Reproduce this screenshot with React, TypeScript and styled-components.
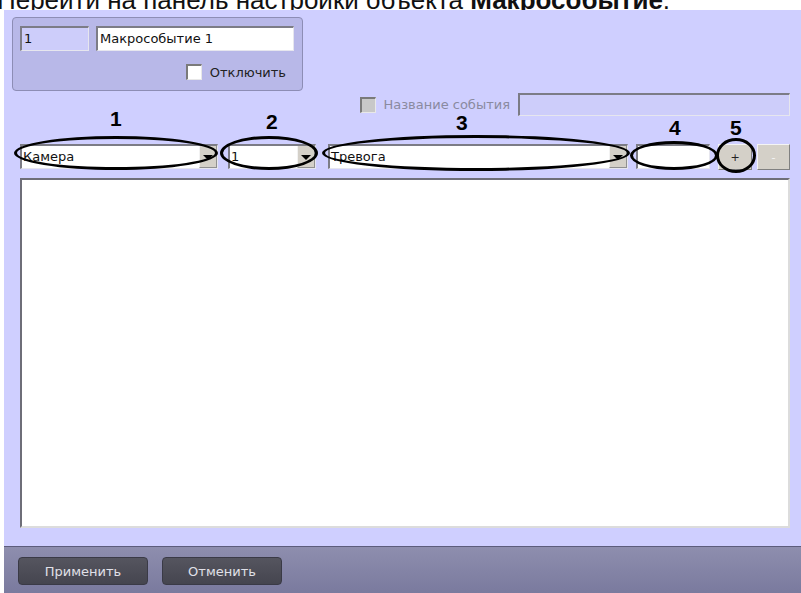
import React from "react";
import styled, { createGlobalStyle } from "styled-components";

const GlobalStyle = createGlobalStyle`
  html, body {
    margin: 0;
    padding: 0;
    background: #ffffff;
  }
  body {
    font-family: Tahoma, "DejaVu Sans", "Liberation Sans", sans-serif;
  }
`;

const Page = styled.div`
  width: 801px;
  height: 593px;
  display: flex;
  flex-direction: column;
  overflow: hidden;
`;

const CaptionStrip = styled.div`
  height: 10px;
  overflow: hidden;
  white-space: nowrap;
`;

const Caption = styled.div`
  font-family: "Liberation Sans", Arial, sans-serif;
  font-size: 26px;
  line-height: 26px;
  color: #111;
  margin-top: -13px;
  margin-left: -3px;

  b {
    font-weight: bold;
  }
`;

const Window = styled.div`
  flex: 1;
  margin-left: 4px;
  display: flex;
  flex-direction: column;
`;

const Panel = styled.div`
  flex: 1;
  background: #cfcfff;
  display: flex;
  flex-direction: column;
  padding: 7px 11px 0 8px;
`;

const GroupBox = styled.div`
  width: 291px;
  height: 74px;
  border: 1px solid #8d8db5;
  border-radius: 4px;
  background: #b8b8e8;
  padding: 8px 8px 0 7px;
  box-sizing: border-box;
  display: flex;
  flex-direction: column;
  gap: 13px;
`;

const FieldRow = styled.div`
  display: flex;
  gap: 7px;
`;

const TextField = styled.div<{ $w: number; $h?: number; $disabled?: boolean }>`
  width: ${(p) => p.$w}px;
  height: ${(p) => p.$h ?? 25}px;
  box-sizing: border-box;
  background: ${(p) => (p.$disabled ? "#cdcdfa" : "#ffffff")};
  border-top: 2px solid #7c7c86;
  border-left: 2px solid #7c7c86;
  border-right: 1px solid #e6e6ee;
  border-bottom: 1px solid #e6e6ee;
  font-size: 13px;
  color: #111;
  padding: 3px 0 0 2px;
  white-space: nowrap;
  overflow: hidden;
`;

const CheckRow = styled.div`
  display: flex;
  justify-content: flex-end;
  align-items: center;
  gap: 8px;
  padding-right: 8px;
`;

const CheckBox = styled.div<{ $disabled?: boolean }>`
  width: 16px;
  height: 16px;
  box-sizing: border-box;
  background: ${(p) => (p.$disabled ? "#c8c8c8" : "#ffffff")};
  border-top: 2px solid #7a7a7a;
  border-left: 2px solid #7a7a7a;
  border-right: 1px solid #e8e8e8;
  border-bottom: 1px solid #e8e8e8;
`;

const CheckLabel = styled.span<{ $disabled?: boolean }>`
  font-size: 13px;
  color: ${(p) => (p.$disabled ? "#8a8aa0" : "#222")};
`;

const NameRow = styled.div`
  margin-top: 2px;
  display: flex;
  justify-content: flex-end;
  align-items: center;
  gap: 8px;
`;

const NameLabelGroup = styled.div`
  display: flex;
  align-items: center;
  gap: 7px;
`;

const ComboRow = styled.div`
  margin-top: 28px;
  margin-left: 8px;
  display: flex;
  align-items: flex-start;
`;

const Marked = styled.div<{ $ml: number }>`
  position: relative;
  margin-left: ${(p) => p.$ml}px;
`;

const Combo = styled.div<{ $w: number }>`
  width: ${(p) => p.$w}px;
  height: 25px;
  box-sizing: border-box;
  background: #ffffff;
  border-top: 2px solid #7c7c86;
  border-left: 2px solid #7c7c86;
  border-right: 1px solid #e6e6ee;
  border-bottom: 1px solid #e6e6ee;
  display: flex;
  font-size: 13px;
  color: #111;
`;

const ComboText = styled.div`
  flex: 1;
  padding: 3px 0 0 1px;
  white-space: nowrap;
`;

const DropButton = styled.div`
  width: 18px;
  background: #d4d0c8;
  border-left: 1px solid #f2f2f2;
  border-right: 1px solid #909090;
  border-bottom: 1px solid #909090;
  box-sizing: border-box;
  display: flex;
  align-items: center;
  justify-content: center;
`;

const Arrow = styled.div`
  width: 0;
  height: 0;
  border-left: 5px solid transparent;
  border-right: 5px solid transparent;
  border-top: 5px solid #000;
  margin-top: 1px;
`;

const PushButton = styled.div<{ $w: number; $faint?: boolean }>`
  width: ${(p) => p.$w}px;
  height: 26px;
  box-sizing: border-box;
  background: #d4d0c8;
  border-top: 1px solid #f4f4f4;
  border-left: 1px solid #f4f4f4;
  border-right: 1px solid #808080;
  border-bottom: 1px solid #808080;
  display: flex;
  align-items: center;
  justify-content: center;
  font-size: 11px;
  color: ${(p) => (p.$faint ? "#f4f4f4" : "#222")};
`;

const Ring = styled.div<{ $l: number; $t: number; $w: number; $h: number }>`
  position: absolute;
  left: ${(p) => p.$l}px;
  top: ${(p) => p.$t}px;
  width: ${(p) => p.$w}px;
  height: ${(p) => p.$h}px;
  box-sizing: border-box;
  border: 3px solid #000;
  border-radius: 50%;
  pointer-events: none;
`;

const Num = styled.div<{ $l: number; $t: number }>`
  position: absolute;
  left: ${(p) => p.$l}px;
  top: ${(p) => p.$t}px;
  font-family: "Liberation Sans", Arial, sans-serif;
  font-weight: bold;
  font-size: 21px;
  line-height: 21px;
  color: #000;
`;

const ListBox = styled.div`
  margin-top: 8px;
  margin-left: 8px;
  width: 770px;
  height: 350px;
  box-sizing: border-box;
  background: #ffffff;
  border-top: 2px solid #6e6e78;
  border-left: 2px solid #6e6e78;
  border-right: 2px solid #dcdcdc;
  border-bottom: 2px solid #dcdcdc;
`;

const BottomBar = styled.div`
  height: 47px;
  box-sizing: border-box;
  border-top: 1px solid #5c5c7c;
  background: linear-gradient(#8e8eae, #7a7a9e);
  display: flex;
  align-items: center;
  gap: 14px;
  padding: 2px 0 0 14px;
`;

const BarButton = styled.div<{ $w: number }>`
  width: ${(p) => p.$w}px;
  height: 28px;
  box-sizing: border-box;
  border: 1px solid #3a3a46;
  border-radius: 4px;
  background: linear-gradient(#55555f, #45454f);
  color: #e0e0e8;
  font-size: 13px;
  display: flex;
  align-items: center;
  justify-content: center;
`;

type Mark = {
  num: string;
  nl: number;
  nt: number;
  ring: [number, number, number, number];
};

const Annotated: React.FC<{ ml: number; mark: Mark; children: React.ReactNode }> = ({
  ml,
  mark,
  children,
}) => (
  <Marked $ml={ml}>
    {children}
    <Ring $l={mark.ring[0]} $t={mark.ring[1]} $w={mark.ring[2]} $h={mark.ring[3]} />
    <Num $l={mark.nl} $t={mark.nt}>
      {mark.num}
    </Num>
  </Marked>
);

const App: React.FC = () => {
  return (
    <Page>
      <GlobalStyle />
      <CaptionStrip>
        <Caption>
          Перейти на панель настройки объекта <b>Макрособытие</b>.
        </Caption>
      </CaptionStrip>
      <Window>
        <Panel>
          <GroupBox>
            <FieldRow>
              <TextField $w={70} $disabled>
                1
              </TextField>
              <TextField $w={201}>Макрособытие 1</TextField>
            </FieldRow>
            <CheckRow>
              <CheckBox />
              <CheckLabel>Отключить</CheckLabel>
            </CheckRow>
          </GroupBox>

          <NameRow>
            <NameLabelGroup>
              <CheckBox $disabled />
              <CheckLabel $disabled>Название события</CheckLabel>
            </NameLabelGroup>
            <TextField $w={272} $h={23} $disabled />
          </NameRow>

          <ComboRow>
            <Annotated
              ml={0}
              mark={{ num: "1", nl: 90, nt: -36, ring: [-6, -8, 204, 34] }}
            >
              <Combo $w={198}>
                <ComboText>Камера</ComboText>
                <DropButton>
                  <Arrow />
                </DropButton>
              </Combo>
            </Annotated>
            <Annotated
              ml={10}
              mark={{ num: "2", nl: 38, nt: -33, ring: [-8, -8, 98, 34] }}
            >
              <Combo $w={88}>
                <ComboText>1</ComboText>
                <DropButton>
                  <Arrow />
                </DropButton>
              </Combo>
            </Annotated>
            <Annotated
              ml={12}
              mark={{ num: "3", nl: 128, nt: -32, ring: [-6, -9, 308, 36] }}
            >
              <Combo $w={300}>
                <ComboText>Тревога</ComboText>
                <DropButton>
                  <Arrow />
                </DropButton>
              </Combo>
            </Annotated>
            <Annotated
              ml={8}
              mark={{ num: "4", nl: 33, nt: -27, ring: [-6, -3, 88, 29] }}
            >
              <TextField $w={74} />
            </Annotated>
            <Annotated
              ml={8}
              mark={{ num: "5", nl: 12, nt: -27, ring: [-2, -6, 40, 35] }}
            >
              <PushButton $w={34}>+</PushButton>
            </Annotated>
            <Marked $ml={5}>
              <PushButton $w={33} $faint>
                -
              </PushButton>
            </Marked>
          </ComboRow>

          <ListBox />
        </Panel>
        <BottomBar>
          <BarButton $w={130}>Применить</BarButton>
          <BarButton $w={120}>Отменить</BarButton>
        </BottomBar>
      </Window>
    </Page>
  );
};

export default App;
